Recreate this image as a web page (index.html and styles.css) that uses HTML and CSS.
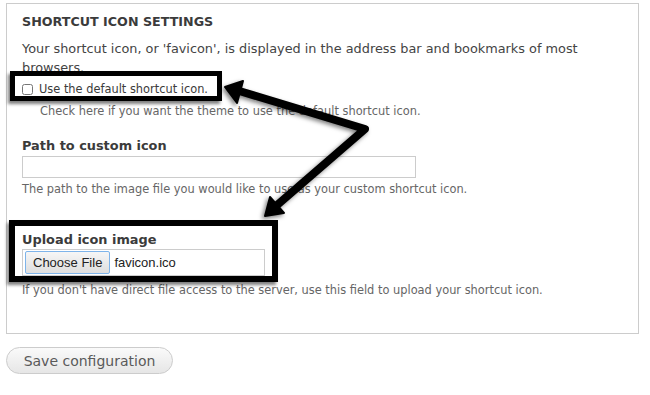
FILE: index.html
```html
<!DOCTYPE html>
<html lang="en">
<head>
    <meta charset="UTF-8">
    <title>Shortcut icon settings</title>
    <link rel="stylesheet" href="styles.css">
</head>
<body>
    <form class="page">
        <fieldset class="settings">
            <legend class="settings-title">SHORTCUT ICON SETTINGS</legend>
            <p class="intro">Your shortcut icon, or 'favicon', is displayed in the address bar and bookmarks of most browsers.</p>

            <div class="form-item">
                <label class="check-label"><input type="checkbox" class="check"> Use the default shortcut icon.</label>
                <div class="description indent">Check here if you want the theme to use the default shortcut icon.</div>
            </div>

            <div class="form-item form-item-path">
                <label class="field-label" for="icon-path">Path to custom icon</label>
                <input type="text" id="icon-path" class="text-input">
                <div class="description">The path to the image file you would like to use as your custom shortcut icon.</div>
            </div>

            <div class="form-item">
                <label class="field-label" for="icon-upload">Upload icon image</label>
                <div class="file-input">
                    <span class="file-button">Choose File</span>
                    <span class="file-name">favicon.ico</span>
                </div>
                <div class="description upload-description">If you don't have direct file access to the server, use this field to upload your shortcut icon.</div>
            </div>
        </fieldset>

        <button type="button" class="save-button">Save configuration</button>

        <!-- annotation overlay -->
        <div class="mark mark-checkbox"></div>
        <div class="mark mark-upload"></div>
        <svg class="arrows" width="650" height="395" viewBox="0 0 650 395">
            <polyline points="236,90 365,129 276,206" fill="none" stroke="#000" stroke-width="8" stroke-linejoin="round" stroke-linecap="round"/>
            <polygon points="225,87 243,81 237,103" fill="#000" stroke="#000" stroke-width="2" stroke-linejoin="round"/>
            <polygon points="265,216 284,213 270,197" fill="#000" stroke="#000" stroke-width="2" stroke-linejoin="round"/>
        </svg>
    </form>
</body>
</html>
```

FILE: styles.css
```css
body {
    margin: 0;
    font-family: "DejaVu Sans", Verdana, sans-serif;
    color: #3b3b3b;
    background: #fff;
}
.page {
    position: relative;
    width: 650px;
    height: 395px;
    padding-top: 3px;
    box-sizing: border-box;
}
.settings {
    margin: 0 0 0 6px;
    width: 633px;
    height: 331px;
    box-sizing: border-box;
    border: 1px solid #ccc;
    padding: 10px 15px 0 15px;
}
.settings-title {
    float: left;
    width: 100%;
    padding: 0;
    font-size: 12.7px;
    font-weight: bold;
    line-height: 16px;
    margin: 0;
}
.intro {
    clear: both;
    margin: 0 0 3px;
    padding-top: 9px;
    font-size: 12.85px;
    line-height: 19px;
    color: #444;
}
.form-item {
    margin-bottom: 19px;
}
.form-item-path {
    margin-bottom: 35px;
}
.check-label {
    display: flex;
    align-items: center;
    font-size: 11.4px;
    line-height: 18px;
}
.check {
    width: 11px;
    height: 11px;
    margin: 0 6px 0 0;
}
.field-label {
    display: block;
    font-size: 12.9px;
    font-weight: bold;
    line-height: 15px;
    margin-bottom: 2.5px;
}
.text-input {
    display: block;
    width: 394px;
    height: 22px;
    box-sizing: border-box;
    border: 1px solid #ccc;
    padding: 2px 4px;
    margin: 0;
}
.description {
    font-size: 11.4px;
    line-height: 16px;
    color: #666;
    margin-top: 3px;
}
.indent {
    margin-top: 5px;
    padding-left: 18px;
}
.upload-description {
    margin-top: 6px;
}
.file-input {
    display: flex;
    align-items: center;
    width: 243px;
    height: 27px;
    box-sizing: border-box;
    border: 1px solid #ccc;
    padding: 0 2px;
}
.file-button {
    font-family: "Liberation Sans", Arial, sans-serif;
    font-size: 13px;
    line-height: 15px;
    color: #222;
    padding: 3px 7px;
    border: 1px solid #7eb4ea;
    border-radius: 2px;
    background: linear-gradient(#f6f6f6, #dedede);
}
.file-name {
    font-family: "Liberation Sans", Arial, sans-serif;
    font-size: 13px;
    color: #222;
    margin-left: 4px;
}
.save-button {
    margin: 13px 0 0 6px;
    width: 167px;
    height: 27px;
    border: 1px solid #ccc;
    border-radius: 14px;
    background: linear-gradient(#fafafa, #e6e6e6);
    font-family: "DejaVu Sans", Verdana, sans-serif;
    font-size: 14px;
    color: #5a5a5a;
    cursor: pointer;
}
.mark {
    position: absolute;
    border: 5px solid #000;
    box-shadow: -2px 3px 3px rgba(0,0,0,0.5);
}
.mark-checkbox {
    left: 10px;
    top: 71px;
    width: 202px;
    height: 20px;
}
.mark-upload {
    left: 9px;
    top: 220px;
    border-width: 6px;
    width: 257px;
    height: 50px;
}
.arrows {
    position: absolute;
    left: 0;
    top: 0;
    filter: drop-shadow(-2px 2px 2px rgba(0,0,0,0.5));
}
```
